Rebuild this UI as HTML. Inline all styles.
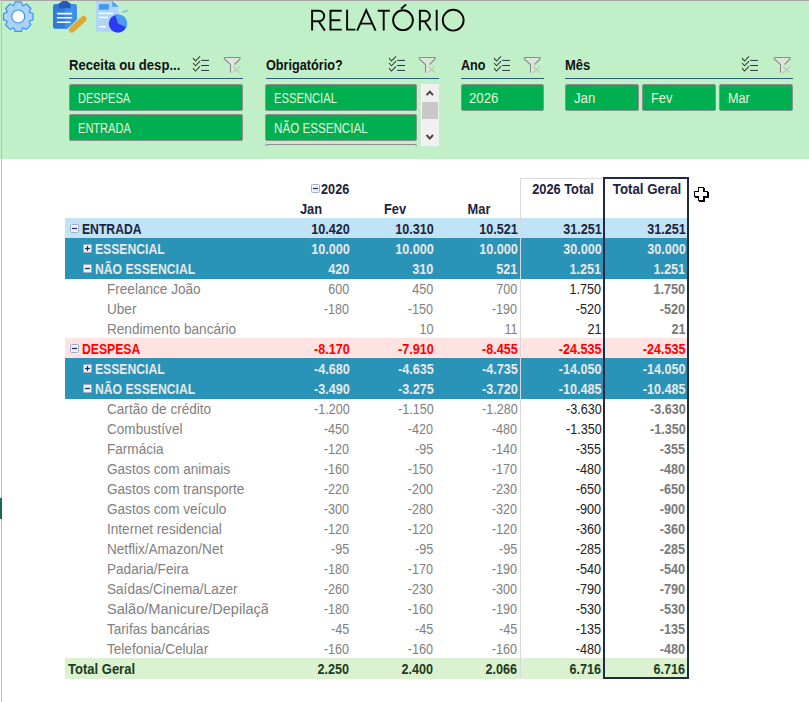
<!DOCTYPE html>
<html><head><meta charset="utf-8"><style>
*{margin:0;padding:0;box-sizing:border-box}
html,body{width:809px;height:702px;overflow:hidden;background:#fff;font-family:"Liberation Sans",sans-serif}
.a{position:absolute}
.t{position:absolute;white-space:nowrap;font-size:13px;line-height:20px}
.btn{position:absolute;background:#00B050;border:1px solid #8f8f8f;border-radius:2px;white-space:nowrap;overflow:hidden}
.stitle{position:absolute;font-weight:bold;font-size:13px;color:#111;white-space:nowrap;line-height:16px}
.uline{position:absolute;height:1px;background:#2A5E80}
.r{position:absolute;left:65px;width:623px;height:20px}
.c{position:absolute;top:0;height:20px;line-height:20px;font-size:13px;white-space:nowrap;text-align:right;padding-top:1px}
.lab{position:absolute;top:0;height:20px;line-height:20px;font-size:13px;white-space:nowrap;padding-top:1px}
</style></head><body>

<div class="a" style="left:0;top:0;width:809px;height:159px;background:#C1F0C8"></div>
<div class="a" style="left:0;top:0;width:809px;height:1px;background:#A6A6A6"></div>
<div class="a" style="left:1px;top:0;width:1px;height:702px;background:#BDBDBD"></div>
<div class="a" style="left:0;top:498px;width:2px;height:21px;background:#1D6A54"></div>
<svg class="a" style="left:0;top:0" width="140" height="40" viewBox="0 0 140 40">
<path d="M13.91 5.51 L15.10 1.93 L21.40 1.93 L22.59 5.51 L22.84 5.61 L23.09 5.72 L26.47 4.03 L30.92 8.48 L29.23 11.86 L29.34 12.11 L29.44 12.36 L33.02 13.55 L33.02 19.85 L29.44 21.04 L29.34 21.29 L29.23 21.54 L30.92 24.92 L26.47 29.37 L23.09 27.68 L22.84 27.79 L22.59 27.89 L21.40 31.47 L15.10 31.47 L13.91 27.89 L13.66 27.79 L13.41 27.68 L10.03 29.37 L5.58 24.92 L7.27 21.54 L7.16 21.29 L7.06 21.04 L3.48 19.85 L3.48 13.55 L7.06 12.36 L7.16 12.11 L7.27 11.86 L5.58 8.48 L10.03 4.03 L13.41 5.72 L13.66 5.61Z" fill="#A9D3FA" stroke="#3D95EE" stroke-width="1.2" stroke-linejoin="round"/>
<circle cx="18.25" cy="16.5" r="6.5" fill="#fff" stroke="#3D95EE" stroke-width="1.2"/>
<path d="M55.5 4 H74.2 Q76.7 4 76.7 6.5 V19.5 L67 28.7 H55.5 Q53 28.7 53 26.2 V6.5 Q53 4 55.5 4Z" fill="#2F7BD6"/>
<path d="M64.7 4 H74.2 Q76.7 4 76.7 6.5 V19.5 L67 28.7 H64.7Z" fill="#3D8FEA"/>
<path d="M58.8 7.8 V4.2 Q58.8 2.6 60.8 2.6 Q61.2 1 63 1 H66.5 Q68.2 1 68.6 2.6 Q70.6 2.6 70.6 4.2 V7.8 Q70.6 8.3 70 8.3 H59.4 Q58.8 8.3 58.8 7.8Z" fill="#2659B8"/>
<g stroke="#fff" stroke-width="1.6" stroke-linecap="round"><line x1="57.5" y1="13.6" x2="71.5" y2="13.6"/><line x1="57.5" y1="17.7" x2="71.5" y2="17.7"/><line x1="57.5" y1="22.3" x2="70" y2="22.3"/></g>
<line x1="72" y1="29.5" x2="83.5" y2="19" stroke="#DDA835" stroke-width="6.2" stroke-linecap="round"/>
<path d="M96.1 1 H112.3 L118.7 6.7 V31.8 H96.1Z" fill="#AED6FB"/>
<path d="M112.3 1 V6.7 H118.7Z" fill="#4C9CF5"/>
<rect x="98.9" y="4.1" width="10" height="5.6" fill="#4596F0"/>
<g stroke="#fff" stroke-width="1.5"><line x1="99" y1="13.4" x2="113" y2="13.4"/><line x1="99" y1="17.4" x2="108" y2="17.4"/><line x1="99" y1="26.7" x2="106" y2="26.7"/></g>
<circle cx="117.9" cy="23.6" r="9.1" fill="#2B3BF5"/>
<path d="M117.90 23.60 L115.30 14.88 A9.1 9.1 0 0 1 126.23 27.26 Z" fill="#4C9CF5"/>
<line x1="122.5" y1="12.3" x2="127.9" y2="10.5" stroke="#7EB8F5" stroke-width="1.5"/>
</svg>
<svg class="a" style="left:300px;top:0" width="180" height="40" viewBox="300 0 180 40"><g fill="none" stroke="#0A0A0A" stroke-width="1.95" stroke-linejoin="miter"><path d="M312.1 30.6 V10.8 H318.95 A5.25 5.25 0 0 1 318.95 21.3 H312.1 M318.6 21.3 L324.9 30.6"/><path d="M341.8 10.8 H330.5 V29.6 H341.8 M330.5 20.2 H340.3"/><path d="M347.1 9.8 V29.6 H355.4"/><path d="M357.2 30.6 L366.2 10.2 L375.6 30.6 M360.8 23.6 H371.8"/><path d="M377.7 10.8 H389.8 M383.7 10.8 V30.6"/><circle cx="403" cy="20.2" r="9.9"/><path d="M401 8.8 L406.2 4.4" stroke-width="1.8"/><path d="M419.9 30.6 V10.8 H424.6 A5.25 5.25 0 0 1 424.6 21.3 H419.9 M424.5 21.3 L430.9 30.6"/><path d="M436.7 9.8 V30.6"/><circle cx="453.2" cy="20.2" r="10.4"/></g></svg>
<div class="a" style="left:69.00px;top:58.00px;font-size:14.00px;line-height:14.00px;color:#111;font-weight:bold;white-space:nowrap;transform:scaleX(0.935);transform-origin:0 50%;">Receita ou desp...</div>
<svg class="a" style="left:191px;top:52px" width="20" height="24" viewBox="0 0 20 24"><path d="M2 6.2 L4.5 9.0 L9 4.4" fill="none" stroke="#2E3B2E" stroke-width="1.05"/><path d="M2 11.0 L4.5 13.8 L9 9.2" fill="none" stroke="#2E3B2E" stroke-width="1.05"/><path d="M2 16.2 L4.5 19.0 L9 14.4" fill="none" stroke="#2E3B2E" stroke-width="1.05"/><line x1="10.2" y1="8.4" x2="18" y2="8.4" stroke="#2A3050" stroke-width="1.0"/><line x1="10.2" y1="13.5" x2="18" y2="13.5" stroke="#2A3050" stroke-width="1.0"/><line x1="10.2" y1="18.4" x2="18" y2="18.4" stroke="#2A3050" stroke-width="1.0"/></svg><svg class="a" style="left:222px;top:52px" width="20" height="24" viewBox="0 0 20 24"><path d="M2.3 5.5 H18 V7 L12.5 12.5 V20.8 H8.5 V12.5 L2.3 7Z" fill="#DCE6DC"/><path d="M2.3 5.5 H18 V7 L12.5 12.5 M8.5 20.8 V12.5 L2.3 7 V5.5" fill="none" stroke="#8C8C88" stroke-width="1.1"/><path d="M11 14.5 L18 20.8 M18 14.5 L11 20.8" stroke="#B5B8AE" stroke-width="1"/></svg>
<div class="uline" style="left:69.0px;top:78px;width:174.0px"></div>
<div class="btn" style="left:69.0px;top:84px;width:174.0px;height:27px"></div>
<div class="a" style="left:78.00px;top:91.00px;font-size:14.00px;line-height:14.00px;color:#EAF2DC;white-space:nowrap;transform:scaleX(0.790);transform-origin:0 50%;">DESPESA</div>
<div class="btn" style="left:69.0px;top:114px;width:174.0px;height:27px"></div>
<div class="a" style="left:78.00px;top:121.00px;font-size:14.00px;line-height:14.00px;color:#EAF2DC;white-space:nowrap;transform:scaleX(0.790);transform-origin:0 50%;">ENTRADA</div>
<div class="a" style="left:265.50px;top:58.00px;font-size:14.00px;line-height:14.00px;color:#111;font-weight:bold;white-space:nowrap;transform:scaleX(0.905);transform-origin:0 50%;">Obrigatório?</div>
<svg class="a" style="left:387px;top:52px" width="20" height="24" viewBox="0 0 20 24"><path d="M2 6.2 L4.5 9.0 L9 4.4" fill="none" stroke="#2E3B2E" stroke-width="1.05"/><path d="M2 11.0 L4.5 13.8 L9 9.2" fill="none" stroke="#2E3B2E" stroke-width="1.05"/><path d="M2 16.2 L4.5 19.0 L9 14.4" fill="none" stroke="#2E3B2E" stroke-width="1.05"/><line x1="10.2" y1="8.4" x2="18" y2="8.4" stroke="#2A3050" stroke-width="1.0"/><line x1="10.2" y1="13.5" x2="18" y2="13.5" stroke="#2A3050" stroke-width="1.0"/><line x1="10.2" y1="18.4" x2="18" y2="18.4" stroke="#2A3050" stroke-width="1.0"/></svg><svg class="a" style="left:417px;top:52px" width="20" height="24" viewBox="0 0 20 24"><path d="M2.3 5.5 H18 V7 L12.5 12.5 V20.8 H8.5 V12.5 L2.3 7Z" fill="#DCE6DC"/><path d="M2.3 5.5 H18 V7 L12.5 12.5 M8.5 20.8 V12.5 L2.3 7 V5.5" fill="none" stroke="#8C8C88" stroke-width="1.1"/><path d="M11 14.5 L18 20.8 M18 14.5 L11 20.8" stroke="#B5B8AE" stroke-width="1"/></svg>
<div class="uline" style="left:265.5px;top:78px;width:173.5px"></div>
<div class="a" style="left:265px;top:84px;width:156px;height:62px;overflow:hidden">
<div class="btn" style="left:0;top:0;width:152px;height:27px"></div>
<div class="btn" style="left:0;top:30px;width:152px;height:27px"></div>
<div class="btn" style="left:0;top:60px;width:152px;height:27px;background:#C9DEF0"></div>
</div>
<div class="a" style="left:274.30px;top:91.00px;font-size:14.00px;line-height:14.00px;color:#EAF2DC;white-space:nowrap;transform:scaleX(0.800);transform-origin:0 50%;">ESSENCIAL</div>
<div class="a" style="left:274.30px;top:121.00px;font-size:14.00px;line-height:14.00px;color:#EAF2DC;white-space:nowrap;transform:scaleX(0.830);transform-origin:0 50%;">NÃO ESSENCIAL</div>
<div class="a" style="left:421px;top:84px;width:18px;height:62px;background:#F0F0F0;border-left:1px solid #fff"></div>
<div class="a" style="left:422px;top:102px;width:16px;height:17px;background:#C8C8C8"></div>
<svg class="a" style="left:421px;top:84px" width="18" height="62" viewBox="0 0 18 62"><path d="M5.6 11.2 L8.8 7.6 L12 11.2" fill="none" stroke="#4A4038" stroke-width="1.9"/><path d="M5.6 51 L8.8 54.6 L12 51" fill="none" stroke="#4A4038" stroke-width="1.9"/></svg>
<div class="a" style="left:461.00px;top:58.00px;font-size:14.00px;line-height:14.00px;color:#111;font-weight:bold;white-space:nowrap;transform:scaleX(0.900);transform-origin:0 50%;">Ano</div>
<svg class="a" style="left:492px;top:52px" width="20" height="24" viewBox="0 0 20 24"><path d="M2 6.2 L4.5 9.0 L9 4.4" fill="none" stroke="#2E3B2E" stroke-width="1.05"/><path d="M2 11.0 L4.5 13.8 L9 9.2" fill="none" stroke="#2E3B2E" stroke-width="1.05"/><path d="M2 16.2 L4.5 19.0 L9 14.4" fill="none" stroke="#2E3B2E" stroke-width="1.05"/><line x1="10.2" y1="8.4" x2="18" y2="8.4" stroke="#2A3050" stroke-width="1.0"/><line x1="10.2" y1="13.5" x2="18" y2="13.5" stroke="#2A3050" stroke-width="1.0"/><line x1="10.2" y1="18.4" x2="18" y2="18.4" stroke="#2A3050" stroke-width="1.0"/></svg><svg class="a" style="left:522px;top:52px" width="20" height="24" viewBox="0 0 20 24"><path d="M2.3 5.5 H18 V7 L12.5 12.5 V20.8 H8.5 V12.5 L2.3 7Z" fill="#DCE6DC"/><path d="M2.3 5.5 H18 V7 L12.5 12.5 M8.5 20.8 V12.5 L2.3 7 V5.5" fill="none" stroke="#8C8C88" stroke-width="1.1"/><path d="M11 14.5 L18 20.8 M18 14.5 L11 20.8" stroke="#B5B8AE" stroke-width="1"/></svg>
<div class="uline" style="left:461.0px;top:78px;width:83.0px"></div>
<div class="btn" style="left:461.0px;top:84px;width:83.0px;height:27px"></div>
<div class="a" style="left:469.00px;top:91.00px;font-size:14.00px;line-height:14.00px;color:#EAF2DC;white-space:nowrap;transform:scaleX(0.940);transform-origin:0 50%;">2026</div>
<div class="a" style="left:565.00px;top:58.00px;font-size:14.00px;line-height:14.00px;color:#111;font-weight:bold;white-space:nowrap;transform:scaleX(0.930);transform-origin:0 50%;">Mês</div>
<svg class="a" style="left:740px;top:52px" width="20" height="24" viewBox="0 0 20 24"><path d="M2 6.2 L4.5 9.0 L9 4.4" fill="none" stroke="#2E3B2E" stroke-width="1.05"/><path d="M2 11.0 L4.5 13.8 L9 9.2" fill="none" stroke="#2E3B2E" stroke-width="1.05"/><path d="M2 16.2 L4.5 19.0 L9 14.4" fill="none" stroke="#2E3B2E" stroke-width="1.05"/><line x1="10.2" y1="8.4" x2="18" y2="8.4" stroke="#2A3050" stroke-width="1.0"/><line x1="10.2" y1="13.5" x2="18" y2="13.5" stroke="#2A3050" stroke-width="1.0"/><line x1="10.2" y1="18.4" x2="18" y2="18.4" stroke="#2A3050" stroke-width="1.0"/></svg><svg class="a" style="left:772px;top:52px" width="20" height="24" viewBox="0 0 20 24"><path d="M2.3 5.5 H18 V7 L12.5 12.5 V20.8 H8.5 V12.5 L2.3 7Z" fill="#DCE6DC"/><path d="M2.3 5.5 H18 V7 L12.5 12.5 M8.5 20.8 V12.5 L2.3 7 V5.5" fill="none" stroke="#8C8C88" stroke-width="1.1"/><path d="M11 14.5 L18 20.8 M18 14.5 L11 20.8" stroke="#B5B8AE" stroke-width="1"/></svg>
<div class="uline" style="left:565.0px;top:78px;width:228.0px"></div>
<div class="btn" style="left:565.0px;top:84px;width:74.0px;height:27px"></div>
<div class="a" style="left:574.00px;top:91.00px;font-size:14.00px;line-height:14.00px;color:#EAF2DC;white-space:nowrap;transform:scaleX(0.940);transform-origin:0 50%;">Jan</div>
<div class="btn" style="left:642.0px;top:84px;width:74.0px;height:27px"></div>
<div class="a" style="left:651.00px;top:91.00px;font-size:14.00px;line-height:14.00px;color:#EAF2DC;white-space:nowrap;transform:scaleX(0.920);transform-origin:0 50%;">Fev</div>
<div class="btn" style="left:719.0px;top:84px;width:74.0px;height:27px"></div>
<div class="a" style="left:728.00px;top:91.00px;font-size:14.00px;line-height:14.00px;color:#EAF2DC;white-space:nowrap;transform:scaleX(0.900);transform-origin:0 50%;">Mar</div>
<div class="a" style="left:520px;top:178px;width:84px;height:1px;background:#D9D9D9"></div>
<svg class="a" style="left:311px;top:184px" width="9" height="9" viewBox="0 0 9 9"><rect x="0.5" y="0.5" width="8" height="8" rx="1" fill="#EDF0F5" stroke="#A3AEC2" stroke-width="1"/><line x1="2" y1="4.5" x2="7" y2="4.5" stroke="#1D2A66" stroke-width="1.2"/></svg>
<div class="a" style="right:459.50px;top:182.00px;font-size:14.00px;line-height:14.00px;color:#1C2440;font-weight:bold;white-space:nowrap;transform:scaleX(0.900);transform-origin:100% 50%;">2026</div>
<div class="a" style="left:311.00px;top:202.00px;font-size:14.00px;line-height:14.00px;color:#1C2440;font-weight:bold;white-space:nowrap;transform:translateX(-50%) scaleX(0.920);transform-origin:50% 50%;">Jan</div>
<div class="a" style="left:395.00px;top:202.00px;font-size:14.00px;line-height:14.00px;color:#1C2440;font-weight:bold;white-space:nowrap;transform:translateX(-50%) scaleX(0.920);transform-origin:50% 50%;">Fev</div>
<div class="a" style="left:478.50px;top:202.00px;font-size:14.00px;line-height:14.00px;color:#1C2440;font-weight:bold;white-space:nowrap;transform:translateX(-50%) scaleX(0.920);transform-origin:50% 50%;">Mar</div>
<div class="a" style="left:562.80px;top:182.00px;font-size:14.00px;line-height:14.00px;color:#1C2440;font-weight:bold;white-space:nowrap;transform:translateX(-50%) scaleX(0.915);transform-origin:50% 50%;">2026 Total</div>
<div class="a" style="left:647.00px;top:182.00px;font-size:14.00px;line-height:14.00px;color:#1C2440;font-weight:bold;white-space:nowrap;transform:translateX(-50%) scaleX(0.950);transform-origin:50% 50%;">Total Geral</div>
<div class="a" style="left:65px;top:218px;width:623px;height:20px;background:#C0E4F5"></div>
<svg class="a" style="left:70px;top:224px" width="9" height="9" viewBox="0 0 9 9"><rect x="0.5" y="0.5" width="8" height="8" rx="1" fill="#EDF0F5" stroke="#A3AEC2" stroke-width="1"/><line x1="2" y1="4.5" x2="7" y2="4.5" stroke="#1D2A66" stroke-width="1.2"/></svg>
<div class="a" style="left:81.50px;top:222.00px;font-size:14.00px;line-height:14.00px;color:#1C2440;font-weight:bold;white-space:nowrap;transform:scaleX(0.870);transform-origin:0 50%;">ENTRADA</div>
<div class="a" style="right:459.50px;top:222.00px;font-size:14.00px;line-height:14.00px;color:#1C2440;font-weight:bold;white-space:nowrap;transform:scaleX(0.900);transform-origin:100% 50%;">10.420</div>
<div class="a" style="right:375.50px;top:222.00px;font-size:14.00px;line-height:14.00px;color:#1C2440;font-weight:bold;white-space:nowrap;transform:scaleX(0.900);transform-origin:100% 50%;">10.310</div>
<div class="a" style="right:291.50px;top:222.00px;font-size:14.00px;line-height:14.00px;color:#1C2440;font-weight:bold;white-space:nowrap;transform:scaleX(0.900);transform-origin:100% 50%;">10.521</div>
<div class="a" style="right:207.50px;top:222.00px;font-size:14.00px;line-height:14.00px;color:#1C2440;font-weight:bold;white-space:nowrap;transform:scaleX(0.900);transform-origin:100% 50%;">31.251</div>
<div class="a" style="right:123.50px;top:222.00px;font-size:14.00px;line-height:14.00px;color:#1C2440;font-weight:bold;white-space:nowrap;transform:scaleX(0.900);transform-origin:100% 50%;">31.251</div>
<div class="a" style="left:65px;top:238px;width:623px;height:20px;background:#2A93B8"></div>
<svg class="a" style="left:83px;top:244px" width="9" height="9" viewBox="0 0 9 9"><rect x="0.5" y="0.5" width="8" height="8" rx="1" fill="#EDF0F5" stroke="#A3AEC2" stroke-width="1"/><line x1="2" y1="4.5" x2="7" y2="4.5" stroke="#1D2A66" stroke-width="1.2"/><line x1="4.5" y1="2" x2="4.5" y2="7" stroke="#1D2A66" stroke-width="1.2"/></svg>
<div class="a" style="left:95.00px;top:242.00px;font-size:14.00px;line-height:14.00px;color:#E8E8E8;font-weight:bold;white-space:nowrap;transform:scaleX(0.870);transform-origin:0 50%;">ESSENCIAL</div>
<div class="a" style="right:459.50px;top:242.00px;font-size:14.00px;line-height:14.00px;color:#E8E8E8;font-weight:bold;white-space:nowrap;transform:scaleX(0.900);transform-origin:100% 50%;">10.000</div>
<div class="a" style="right:375.50px;top:242.00px;font-size:14.00px;line-height:14.00px;color:#E8E8E8;font-weight:bold;white-space:nowrap;transform:scaleX(0.900);transform-origin:100% 50%;">10.000</div>
<div class="a" style="right:291.50px;top:242.00px;font-size:14.00px;line-height:14.00px;color:#E8E8E8;font-weight:bold;white-space:nowrap;transform:scaleX(0.900);transform-origin:100% 50%;">10.000</div>
<div class="a" style="right:207.50px;top:242.00px;font-size:14.00px;line-height:14.00px;color:#E8E8E8;font-weight:bold;white-space:nowrap;transform:scaleX(0.900);transform-origin:100% 50%;">30.000</div>
<div class="a" style="right:123.50px;top:242.00px;font-size:14.00px;line-height:14.00px;color:#E8E8E8;font-weight:bold;white-space:nowrap;transform:scaleX(0.900);transform-origin:100% 50%;">30.000</div>
<div class="a" style="left:65px;top:258px;width:623px;height:21px;background:#2A93B8"></div>
<svg class="a" style="left:83px;top:264px" width="9" height="9" viewBox="0 0 9 9"><rect x="0.5" y="0.5" width="8" height="8" rx="1" fill="#EDF0F5" stroke="#A3AEC2" stroke-width="1"/><line x1="2" y1="4.5" x2="7" y2="4.5" stroke="#1D2A66" stroke-width="1.2"/></svg>
<div class="a" style="left:95.00px;top:262.00px;font-size:14.00px;line-height:14.00px;color:#E8E8E8;font-weight:bold;white-space:nowrap;transform:scaleX(0.870);transform-origin:0 50%;">NÃO ESSENCIAL</div>
<div class="a" style="right:459.50px;top:262.00px;font-size:14.00px;line-height:14.00px;color:#E8E8E8;font-weight:bold;white-space:nowrap;transform:scaleX(0.900);transform-origin:100% 50%;">420</div>
<div class="a" style="right:375.50px;top:262.00px;font-size:14.00px;line-height:14.00px;color:#E8E8E8;font-weight:bold;white-space:nowrap;transform:scaleX(0.900);transform-origin:100% 50%;">310</div>
<div class="a" style="right:291.50px;top:262.00px;font-size:14.00px;line-height:14.00px;color:#E8E8E8;font-weight:bold;white-space:nowrap;transform:scaleX(0.900);transform-origin:100% 50%;">521</div>
<div class="a" style="right:207.50px;top:262.00px;font-size:14.00px;line-height:14.00px;color:#E8E8E8;font-weight:bold;white-space:nowrap;transform:scaleX(0.900);transform-origin:100% 50%;">1.251</div>
<div class="a" style="right:123.50px;top:262.00px;font-size:14.00px;line-height:14.00px;color:#E8E8E8;font-weight:bold;white-space:nowrap;transform:scaleX(0.900);transform-origin:100% 50%;">1.251</div>
<div class="a" style="left:106.80px;top:282.00px;font-size:14.00px;line-height:14.00px;color:#808080;white-space:nowrap;transform:scaleX(0.970);transform-origin:0 50%;">Freelance João</div>
<div class="a" style="right:459.50px;top:282.00px;font-size:14.00px;line-height:14.00px;color:#808080;white-space:nowrap;transform:scaleX(0.900);transform-origin:100% 50%;">600</div>
<div class="a" style="right:375.50px;top:282.00px;font-size:14.00px;line-height:14.00px;color:#808080;white-space:nowrap;transform:scaleX(0.900);transform-origin:100% 50%;">450</div>
<div class="a" style="right:291.50px;top:282.00px;font-size:14.00px;line-height:14.00px;color:#808080;white-space:nowrap;transform:scaleX(0.900);transform-origin:100% 50%;">700</div>
<div class="a" style="right:207.50px;top:282.00px;font-size:14.00px;line-height:14.00px;color:#222222;white-space:nowrap;transform:scaleX(0.900);transform-origin:100% 50%;">1.750</div>
<div class="a" style="right:123.50px;top:282.00px;font-size:14.00px;line-height:14.00px;color:#7A7A7A;font-weight:bold;white-space:nowrap;transform:scaleX(0.900);transform-origin:100% 50%;">1.750</div>
<div class="a" style="left:106.80px;top:302.00px;font-size:14.00px;line-height:14.00px;color:#808080;white-space:nowrap;transform:scaleX(0.970);transform-origin:0 50%;">Uber</div>
<div class="a" style="right:459.50px;top:302.00px;font-size:14.00px;line-height:14.00px;color:#808080;white-space:nowrap;transform:scaleX(0.900);transform-origin:100% 50%;">-180</div>
<div class="a" style="right:375.50px;top:302.00px;font-size:14.00px;line-height:14.00px;color:#808080;white-space:nowrap;transform:scaleX(0.900);transform-origin:100% 50%;">-150</div>
<div class="a" style="right:291.50px;top:302.00px;font-size:14.00px;line-height:14.00px;color:#808080;white-space:nowrap;transform:scaleX(0.900);transform-origin:100% 50%;">-190</div>
<div class="a" style="right:207.50px;top:302.00px;font-size:14.00px;line-height:14.00px;color:#222222;white-space:nowrap;transform:scaleX(0.900);transform-origin:100% 50%;">-520</div>
<div class="a" style="right:123.50px;top:302.00px;font-size:14.00px;line-height:14.00px;color:#7A7A7A;font-weight:bold;white-space:nowrap;transform:scaleX(0.900);transform-origin:100% 50%;">-520</div>
<div class="a" style="left:106.80px;top:322.00px;font-size:14.00px;line-height:14.00px;color:#808080;white-space:nowrap;transform:scaleX(0.970);transform-origin:0 50%;">Rendimento bancário</div>
<div class="a" style="right:375.50px;top:322.00px;font-size:14.00px;line-height:14.00px;color:#808080;white-space:nowrap;transform:scaleX(0.900);transform-origin:100% 50%;">10</div>
<div class="a" style="right:291.50px;top:322.00px;font-size:14.00px;line-height:14.00px;color:#808080;white-space:nowrap;transform:scaleX(0.900);transform-origin:100% 50%;">11</div>
<div class="a" style="right:207.50px;top:322.00px;font-size:14.00px;line-height:14.00px;color:#222222;white-space:nowrap;transform:scaleX(0.900);transform-origin:100% 50%;">21</div>
<div class="a" style="right:123.50px;top:322.00px;font-size:14.00px;line-height:14.00px;color:#7A7A7A;font-weight:bold;white-space:nowrap;transform:scaleX(0.900);transform-origin:100% 50%;">21</div>
<div class="a" style="left:65px;top:338px;width:623px;height:20px;background:#FFE2E2"></div>
<svg class="a" style="left:70px;top:344px" width="9" height="9" viewBox="0 0 9 9"><rect x="0.5" y="0.5" width="8" height="8" rx="1" fill="#EDF0F5" stroke="#A3AEC2" stroke-width="1"/><line x1="2" y1="4.5" x2="7" y2="4.5" stroke="#1D2A66" stroke-width="1.2"/></svg>
<div class="a" style="left:81.50px;top:342.00px;font-size:14.00px;line-height:14.00px;color:#FF0000;font-weight:bold;white-space:nowrap;transform:scaleX(0.870);transform-origin:0 50%;">DESPESA</div>
<div class="a" style="right:459.50px;top:342.00px;font-size:14.00px;line-height:14.00px;color:#FF0000;font-weight:bold;white-space:nowrap;transform:scaleX(0.900);transform-origin:100% 50%;">-8.170</div>
<div class="a" style="right:375.50px;top:342.00px;font-size:14.00px;line-height:14.00px;color:#FF0000;font-weight:bold;white-space:nowrap;transform:scaleX(0.900);transform-origin:100% 50%;">-7.910</div>
<div class="a" style="right:291.50px;top:342.00px;font-size:14.00px;line-height:14.00px;color:#FF0000;font-weight:bold;white-space:nowrap;transform:scaleX(0.900);transform-origin:100% 50%;">-8.455</div>
<div class="a" style="right:207.50px;top:342.00px;font-size:14.00px;line-height:14.00px;color:#FF0000;font-weight:bold;white-space:nowrap;transform:scaleX(0.900);transform-origin:100% 50%;">-24.535</div>
<div class="a" style="right:123.50px;top:342.00px;font-size:14.00px;line-height:14.00px;color:#FF0000;font-weight:bold;white-space:nowrap;transform:scaleX(0.900);transform-origin:100% 50%;">-24.535</div>
<div class="a" style="left:65px;top:358px;width:623px;height:20px;background:#2A93B8"></div>
<svg class="a" style="left:83px;top:364px" width="9" height="9" viewBox="0 0 9 9"><rect x="0.5" y="0.5" width="8" height="8" rx="1" fill="#EDF0F5" stroke="#A3AEC2" stroke-width="1"/><line x1="2" y1="4.5" x2="7" y2="4.5" stroke="#1D2A66" stroke-width="1.2"/><line x1="4.5" y1="2" x2="4.5" y2="7" stroke="#1D2A66" stroke-width="1.2"/></svg>
<div class="a" style="left:95.00px;top:362.00px;font-size:14.00px;line-height:14.00px;color:#E8E8E8;font-weight:bold;white-space:nowrap;transform:scaleX(0.870);transform-origin:0 50%;">ESSENCIAL</div>
<div class="a" style="right:459.50px;top:362.00px;font-size:14.00px;line-height:14.00px;color:#E8E8E8;font-weight:bold;white-space:nowrap;transform:scaleX(0.900);transform-origin:100% 50%;">-4.680</div>
<div class="a" style="right:375.50px;top:362.00px;font-size:14.00px;line-height:14.00px;color:#E8E8E8;font-weight:bold;white-space:nowrap;transform:scaleX(0.900);transform-origin:100% 50%;">-4.635</div>
<div class="a" style="right:291.50px;top:362.00px;font-size:14.00px;line-height:14.00px;color:#E8E8E8;font-weight:bold;white-space:nowrap;transform:scaleX(0.900);transform-origin:100% 50%;">-4.735</div>
<div class="a" style="right:207.50px;top:362.00px;font-size:14.00px;line-height:14.00px;color:#E8E8E8;font-weight:bold;white-space:nowrap;transform:scaleX(0.900);transform-origin:100% 50%;">-14.050</div>
<div class="a" style="right:123.50px;top:362.00px;font-size:14.00px;line-height:14.00px;color:#E8E8E8;font-weight:bold;white-space:nowrap;transform:scaleX(0.900);transform-origin:100% 50%;">-14.050</div>
<div class="a" style="left:65px;top:378px;width:623px;height:21px;background:#2A93B8"></div>
<svg class="a" style="left:83px;top:384px" width="9" height="9" viewBox="0 0 9 9"><rect x="0.5" y="0.5" width="8" height="8" rx="1" fill="#EDF0F5" stroke="#A3AEC2" stroke-width="1"/><line x1="2" y1="4.5" x2="7" y2="4.5" stroke="#1D2A66" stroke-width="1.2"/></svg>
<div class="a" style="left:95.00px;top:382.00px;font-size:14.00px;line-height:14.00px;color:#E8E8E8;font-weight:bold;white-space:nowrap;transform:scaleX(0.870);transform-origin:0 50%;">NÃO ESSENCIAL</div>
<div class="a" style="right:459.50px;top:382.00px;font-size:14.00px;line-height:14.00px;color:#E8E8E8;font-weight:bold;white-space:nowrap;transform:scaleX(0.900);transform-origin:100% 50%;">-3.490</div>
<div class="a" style="right:375.50px;top:382.00px;font-size:14.00px;line-height:14.00px;color:#E8E8E8;font-weight:bold;white-space:nowrap;transform:scaleX(0.900);transform-origin:100% 50%;">-3.275</div>
<div class="a" style="right:291.50px;top:382.00px;font-size:14.00px;line-height:14.00px;color:#E8E8E8;font-weight:bold;white-space:nowrap;transform:scaleX(0.900);transform-origin:100% 50%;">-3.720</div>
<div class="a" style="right:207.50px;top:382.00px;font-size:14.00px;line-height:14.00px;color:#E8E8E8;font-weight:bold;white-space:nowrap;transform:scaleX(0.900);transform-origin:100% 50%;">-10.485</div>
<div class="a" style="right:123.50px;top:382.00px;font-size:14.00px;line-height:14.00px;color:#E8E8E8;font-weight:bold;white-space:nowrap;transform:scaleX(0.900);transform-origin:100% 50%;">-10.485</div>
<div class="a" style="left:106.80px;top:402.00px;font-size:14.00px;line-height:14.00px;color:#808080;white-space:nowrap;transform:scaleX(0.970);transform-origin:0 50%;">Cartão de crédito</div>
<div class="a" style="right:459.50px;top:402.00px;font-size:14.00px;line-height:14.00px;color:#808080;white-space:nowrap;transform:scaleX(0.900);transform-origin:100% 50%;">-1.200</div>
<div class="a" style="right:375.50px;top:402.00px;font-size:14.00px;line-height:14.00px;color:#808080;white-space:nowrap;transform:scaleX(0.900);transform-origin:100% 50%;">-1.150</div>
<div class="a" style="right:291.50px;top:402.00px;font-size:14.00px;line-height:14.00px;color:#808080;white-space:nowrap;transform:scaleX(0.900);transform-origin:100% 50%;">-1.280</div>
<div class="a" style="right:207.50px;top:402.00px;font-size:14.00px;line-height:14.00px;color:#222222;white-space:nowrap;transform:scaleX(0.900);transform-origin:100% 50%;">-3.630</div>
<div class="a" style="right:123.50px;top:402.00px;font-size:14.00px;line-height:14.00px;color:#7A7A7A;font-weight:bold;white-space:nowrap;transform:scaleX(0.900);transform-origin:100% 50%;">-3.630</div>
<div class="a" style="left:106.80px;top:422.00px;font-size:14.00px;line-height:14.00px;color:#808080;white-space:nowrap;transform:scaleX(0.970);transform-origin:0 50%;">Combustível</div>
<div class="a" style="right:459.50px;top:422.00px;font-size:14.00px;line-height:14.00px;color:#808080;white-space:nowrap;transform:scaleX(0.900);transform-origin:100% 50%;">-450</div>
<div class="a" style="right:375.50px;top:422.00px;font-size:14.00px;line-height:14.00px;color:#808080;white-space:nowrap;transform:scaleX(0.900);transform-origin:100% 50%;">-420</div>
<div class="a" style="right:291.50px;top:422.00px;font-size:14.00px;line-height:14.00px;color:#808080;white-space:nowrap;transform:scaleX(0.900);transform-origin:100% 50%;">-480</div>
<div class="a" style="right:207.50px;top:422.00px;font-size:14.00px;line-height:14.00px;color:#222222;white-space:nowrap;transform:scaleX(0.900);transform-origin:100% 50%;">-1.350</div>
<div class="a" style="right:123.50px;top:422.00px;font-size:14.00px;line-height:14.00px;color:#7A7A7A;font-weight:bold;white-space:nowrap;transform:scaleX(0.900);transform-origin:100% 50%;">-1.350</div>
<div class="a" style="left:106.80px;top:442.00px;font-size:14.00px;line-height:14.00px;color:#808080;white-space:nowrap;transform:scaleX(0.970);transform-origin:0 50%;">Farmácia</div>
<div class="a" style="right:459.50px;top:442.00px;font-size:14.00px;line-height:14.00px;color:#808080;white-space:nowrap;transform:scaleX(0.900);transform-origin:100% 50%;">-120</div>
<div class="a" style="right:375.50px;top:442.00px;font-size:14.00px;line-height:14.00px;color:#808080;white-space:nowrap;transform:scaleX(0.900);transform-origin:100% 50%;">-95</div>
<div class="a" style="right:291.50px;top:442.00px;font-size:14.00px;line-height:14.00px;color:#808080;white-space:nowrap;transform:scaleX(0.900);transform-origin:100% 50%;">-140</div>
<div class="a" style="right:207.50px;top:442.00px;font-size:14.00px;line-height:14.00px;color:#222222;white-space:nowrap;transform:scaleX(0.900);transform-origin:100% 50%;">-355</div>
<div class="a" style="right:123.50px;top:442.00px;font-size:14.00px;line-height:14.00px;color:#7A7A7A;font-weight:bold;white-space:nowrap;transform:scaleX(0.900);transform-origin:100% 50%;">-355</div>
<div class="a" style="left:106.80px;top:462.00px;font-size:14.00px;line-height:14.00px;color:#808080;white-space:nowrap;transform:scaleX(0.970);transform-origin:0 50%;">Gastos com animais</div>
<div class="a" style="right:459.50px;top:462.00px;font-size:14.00px;line-height:14.00px;color:#808080;white-space:nowrap;transform:scaleX(0.900);transform-origin:100% 50%;">-160</div>
<div class="a" style="right:375.50px;top:462.00px;font-size:14.00px;line-height:14.00px;color:#808080;white-space:nowrap;transform:scaleX(0.900);transform-origin:100% 50%;">-150</div>
<div class="a" style="right:291.50px;top:462.00px;font-size:14.00px;line-height:14.00px;color:#808080;white-space:nowrap;transform:scaleX(0.900);transform-origin:100% 50%;">-170</div>
<div class="a" style="right:207.50px;top:462.00px;font-size:14.00px;line-height:14.00px;color:#222222;white-space:nowrap;transform:scaleX(0.900);transform-origin:100% 50%;">-480</div>
<div class="a" style="right:123.50px;top:462.00px;font-size:14.00px;line-height:14.00px;color:#7A7A7A;font-weight:bold;white-space:nowrap;transform:scaleX(0.900);transform-origin:100% 50%;">-480</div>
<div class="a" style="left:106.80px;top:482.00px;font-size:14.00px;line-height:14.00px;color:#808080;white-space:nowrap;transform:scaleX(0.970);transform-origin:0 50%;">Gastos com transporte</div>
<div class="a" style="right:459.50px;top:482.00px;font-size:14.00px;line-height:14.00px;color:#808080;white-space:nowrap;transform:scaleX(0.900);transform-origin:100% 50%;">-220</div>
<div class="a" style="right:375.50px;top:482.00px;font-size:14.00px;line-height:14.00px;color:#808080;white-space:nowrap;transform:scaleX(0.900);transform-origin:100% 50%;">-200</div>
<div class="a" style="right:291.50px;top:482.00px;font-size:14.00px;line-height:14.00px;color:#808080;white-space:nowrap;transform:scaleX(0.900);transform-origin:100% 50%;">-230</div>
<div class="a" style="right:207.50px;top:482.00px;font-size:14.00px;line-height:14.00px;color:#222222;white-space:nowrap;transform:scaleX(0.900);transform-origin:100% 50%;">-650</div>
<div class="a" style="right:123.50px;top:482.00px;font-size:14.00px;line-height:14.00px;color:#7A7A7A;font-weight:bold;white-space:nowrap;transform:scaleX(0.900);transform-origin:100% 50%;">-650</div>
<div class="a" style="left:106.80px;top:502.00px;font-size:14.00px;line-height:14.00px;color:#808080;white-space:nowrap;transform:scaleX(0.970);transform-origin:0 50%;">Gastos com veículo</div>
<div class="a" style="right:459.50px;top:502.00px;font-size:14.00px;line-height:14.00px;color:#808080;white-space:nowrap;transform:scaleX(0.900);transform-origin:100% 50%;">-300</div>
<div class="a" style="right:375.50px;top:502.00px;font-size:14.00px;line-height:14.00px;color:#808080;white-space:nowrap;transform:scaleX(0.900);transform-origin:100% 50%;">-280</div>
<div class="a" style="right:291.50px;top:502.00px;font-size:14.00px;line-height:14.00px;color:#808080;white-space:nowrap;transform:scaleX(0.900);transform-origin:100% 50%;">-320</div>
<div class="a" style="right:207.50px;top:502.00px;font-size:14.00px;line-height:14.00px;color:#222222;white-space:nowrap;transform:scaleX(0.900);transform-origin:100% 50%;">-900</div>
<div class="a" style="right:123.50px;top:502.00px;font-size:14.00px;line-height:14.00px;color:#7A7A7A;font-weight:bold;white-space:nowrap;transform:scaleX(0.900);transform-origin:100% 50%;">-900</div>
<div class="a" style="left:106.80px;top:522.00px;font-size:14.00px;line-height:14.00px;color:#808080;white-space:nowrap;transform:scaleX(0.970);transform-origin:0 50%;">Internet residencial</div>
<div class="a" style="right:459.50px;top:522.00px;font-size:14.00px;line-height:14.00px;color:#808080;white-space:nowrap;transform:scaleX(0.900);transform-origin:100% 50%;">-120</div>
<div class="a" style="right:375.50px;top:522.00px;font-size:14.00px;line-height:14.00px;color:#808080;white-space:nowrap;transform:scaleX(0.900);transform-origin:100% 50%;">-120</div>
<div class="a" style="right:291.50px;top:522.00px;font-size:14.00px;line-height:14.00px;color:#808080;white-space:nowrap;transform:scaleX(0.900);transform-origin:100% 50%;">-120</div>
<div class="a" style="right:207.50px;top:522.00px;font-size:14.00px;line-height:14.00px;color:#222222;white-space:nowrap;transform:scaleX(0.900);transform-origin:100% 50%;">-360</div>
<div class="a" style="right:123.50px;top:522.00px;font-size:14.00px;line-height:14.00px;color:#7A7A7A;font-weight:bold;white-space:nowrap;transform:scaleX(0.900);transform-origin:100% 50%;">-360</div>
<div class="a" style="left:106.80px;top:542.00px;font-size:14.00px;line-height:14.00px;color:#808080;white-space:nowrap;transform:scaleX(0.970);transform-origin:0 50%;">Netflix/Amazon/Net</div>
<div class="a" style="right:459.50px;top:542.00px;font-size:14.00px;line-height:14.00px;color:#808080;white-space:nowrap;transform:scaleX(0.900);transform-origin:100% 50%;">-95</div>
<div class="a" style="right:375.50px;top:542.00px;font-size:14.00px;line-height:14.00px;color:#808080;white-space:nowrap;transform:scaleX(0.900);transform-origin:100% 50%;">-95</div>
<div class="a" style="right:291.50px;top:542.00px;font-size:14.00px;line-height:14.00px;color:#808080;white-space:nowrap;transform:scaleX(0.900);transform-origin:100% 50%;">-95</div>
<div class="a" style="right:207.50px;top:542.00px;font-size:14.00px;line-height:14.00px;color:#222222;white-space:nowrap;transform:scaleX(0.900);transform-origin:100% 50%;">-285</div>
<div class="a" style="right:123.50px;top:542.00px;font-size:14.00px;line-height:14.00px;color:#7A7A7A;font-weight:bold;white-space:nowrap;transform:scaleX(0.900);transform-origin:100% 50%;">-285</div>
<div class="a" style="left:106.80px;top:562.00px;font-size:14.00px;line-height:14.00px;color:#808080;white-space:nowrap;transform:scaleX(0.970);transform-origin:0 50%;">Padaria/Feira</div>
<div class="a" style="right:459.50px;top:562.00px;font-size:14.00px;line-height:14.00px;color:#808080;white-space:nowrap;transform:scaleX(0.900);transform-origin:100% 50%;">-180</div>
<div class="a" style="right:375.50px;top:562.00px;font-size:14.00px;line-height:14.00px;color:#808080;white-space:nowrap;transform:scaleX(0.900);transform-origin:100% 50%;">-170</div>
<div class="a" style="right:291.50px;top:562.00px;font-size:14.00px;line-height:14.00px;color:#808080;white-space:nowrap;transform:scaleX(0.900);transform-origin:100% 50%;">-190</div>
<div class="a" style="right:207.50px;top:562.00px;font-size:14.00px;line-height:14.00px;color:#222222;white-space:nowrap;transform:scaleX(0.900);transform-origin:100% 50%;">-540</div>
<div class="a" style="right:123.50px;top:562.00px;font-size:14.00px;line-height:14.00px;color:#7A7A7A;font-weight:bold;white-space:nowrap;transform:scaleX(0.900);transform-origin:100% 50%;">-540</div>
<div class="a" style="left:106.80px;top:582.00px;font-size:14.00px;line-height:14.00px;color:#808080;white-space:nowrap;transform:scaleX(0.970);transform-origin:0 50%;">Saídas/Cinema/Lazer</div>
<div class="a" style="right:459.50px;top:582.00px;font-size:14.00px;line-height:14.00px;color:#808080;white-space:nowrap;transform:scaleX(0.900);transform-origin:100% 50%;">-260</div>
<div class="a" style="right:375.50px;top:582.00px;font-size:14.00px;line-height:14.00px;color:#808080;white-space:nowrap;transform:scaleX(0.900);transform-origin:100% 50%;">-230</div>
<div class="a" style="right:291.50px;top:582.00px;font-size:14.00px;line-height:14.00px;color:#808080;white-space:nowrap;transform:scaleX(0.900);transform-origin:100% 50%;">-300</div>
<div class="a" style="right:207.50px;top:582.00px;font-size:14.00px;line-height:14.00px;color:#222222;white-space:nowrap;transform:scaleX(0.900);transform-origin:100% 50%;">-790</div>
<div class="a" style="right:123.50px;top:582.00px;font-size:14.00px;line-height:14.00px;color:#7A7A7A;font-weight:bold;white-space:nowrap;transform:scaleX(0.900);transform-origin:100% 50%;">-790</div>
<div class="a" style="left:0;top:0;width:268px;height:702px;overflow:hidden"><div class="a" style="left:106.80px;top:602.00px;font-size:14.00px;line-height:14.00px;color:#808080;white-space:nowrap;transform:scaleX(1.040);transform-origin:0 50%;">Salão/Manicure/Depilação</div></div>
<div class="a" style="right:459.50px;top:602.00px;font-size:14.00px;line-height:14.00px;color:#808080;white-space:nowrap;transform:scaleX(0.900);transform-origin:100% 50%;">-180</div>
<div class="a" style="right:375.50px;top:602.00px;font-size:14.00px;line-height:14.00px;color:#808080;white-space:nowrap;transform:scaleX(0.900);transform-origin:100% 50%;">-160</div>
<div class="a" style="right:291.50px;top:602.00px;font-size:14.00px;line-height:14.00px;color:#808080;white-space:nowrap;transform:scaleX(0.900);transform-origin:100% 50%;">-190</div>
<div class="a" style="right:207.50px;top:602.00px;font-size:14.00px;line-height:14.00px;color:#222222;white-space:nowrap;transform:scaleX(0.900);transform-origin:100% 50%;">-530</div>
<div class="a" style="right:123.50px;top:602.00px;font-size:14.00px;line-height:14.00px;color:#7A7A7A;font-weight:bold;white-space:nowrap;transform:scaleX(0.900);transform-origin:100% 50%;">-530</div>
<div class="a" style="left:106.80px;top:622.00px;font-size:14.00px;line-height:14.00px;color:#808080;white-space:nowrap;transform:scaleX(0.970);transform-origin:0 50%;">Tarifas bancárias</div>
<div class="a" style="right:459.50px;top:622.00px;font-size:14.00px;line-height:14.00px;color:#808080;white-space:nowrap;transform:scaleX(0.900);transform-origin:100% 50%;">-45</div>
<div class="a" style="right:375.50px;top:622.00px;font-size:14.00px;line-height:14.00px;color:#808080;white-space:nowrap;transform:scaleX(0.900);transform-origin:100% 50%;">-45</div>
<div class="a" style="right:291.50px;top:622.00px;font-size:14.00px;line-height:14.00px;color:#808080;white-space:nowrap;transform:scaleX(0.900);transform-origin:100% 50%;">-45</div>
<div class="a" style="right:207.50px;top:622.00px;font-size:14.00px;line-height:14.00px;color:#222222;white-space:nowrap;transform:scaleX(0.900);transform-origin:100% 50%;">-135</div>
<div class="a" style="right:123.50px;top:622.00px;font-size:14.00px;line-height:14.00px;color:#7A7A7A;font-weight:bold;white-space:nowrap;transform:scaleX(0.900);transform-origin:100% 50%;">-135</div>
<div class="a" style="left:106.80px;top:642.00px;font-size:14.00px;line-height:14.00px;color:#808080;white-space:nowrap;transform:scaleX(0.970);transform-origin:0 50%;">Telefonia/Celular</div>
<div class="a" style="right:459.50px;top:642.00px;font-size:14.00px;line-height:14.00px;color:#808080;white-space:nowrap;transform:scaleX(0.900);transform-origin:100% 50%;">-160</div>
<div class="a" style="right:375.50px;top:642.00px;font-size:14.00px;line-height:14.00px;color:#808080;white-space:nowrap;transform:scaleX(0.900);transform-origin:100% 50%;">-160</div>
<div class="a" style="right:291.50px;top:642.00px;font-size:14.00px;line-height:14.00px;color:#808080;white-space:nowrap;transform:scaleX(0.900);transform-origin:100% 50%;">-160</div>
<div class="a" style="right:207.50px;top:642.00px;font-size:14.00px;line-height:14.00px;color:#222222;white-space:nowrap;transform:scaleX(0.900);transform-origin:100% 50%;">-480</div>
<div class="a" style="right:123.50px;top:642.00px;font-size:14.00px;line-height:14.00px;color:#7A7A7A;font-weight:bold;white-space:nowrap;transform:scaleX(0.900);transform-origin:100% 50%;">-480</div>
<div class="a" style="left:65px;top:658px;width:623px;height:21px;background:#DAF2D0"></div>
<div class="a" style="left:67.50px;top:662.00px;font-size:14.00px;line-height:14.00px;color:#213B1D;font-weight:bold;white-space:nowrap;transform:scaleX(0.930);transform-origin:0 50%;">Total Geral</div>
<div class="a" style="right:459.50px;top:662.00px;font-size:14.00px;line-height:14.00px;color:#213B1D;font-weight:bold;white-space:nowrap;transform:scaleX(0.900);transform-origin:100% 50%;">2.250</div>
<div class="a" style="right:375.50px;top:662.00px;font-size:14.00px;line-height:14.00px;color:#213B1D;font-weight:bold;white-space:nowrap;transform:scaleX(0.900);transform-origin:100% 50%;">2.400</div>
<div class="a" style="right:291.50px;top:662.00px;font-size:14.00px;line-height:14.00px;color:#213B1D;font-weight:bold;white-space:nowrap;transform:scaleX(0.900);transform-origin:100% 50%;">2.066</div>
<div class="a" style="right:207.50px;top:662.00px;font-size:14.00px;line-height:14.00px;color:#213B1D;font-weight:bold;white-space:nowrap;transform:scaleX(0.900);transform-origin:100% 50%;">6.716</div>
<div class="a" style="right:123.50px;top:662.00px;font-size:14.00px;line-height:14.00px;color:#213B1D;font-weight:bold;white-space:nowrap;transform:scaleX(0.900);transform-origin:100% 50%;">6.716</div>
<div class="a" style="left:520px;top:178px;width:1px;height:500px;background:#D9D9D9"></div>
<div class="a" style="left:603px;top:177px;width:86px;height:502px;border:2px solid #1F2A48"></div>
<svg class="a" style="left:690px;top:183px" width="24" height="24" viewBox="0 0 24 24" shape-rendering="crispEdges"><path d="M9 5 H15 V9 H19 V15 H15 V19 H9 V15 H5 V9 H9Z" fill="#000"/><path d="M8 4 H14 V8 H18 V14 H14 V18 H8 V14 H4 V8 H8Z" fill="#000"/><path d="M9 5 H13 V9 H17 V13 H13 V17 H9 V13 H5 V9 H9Z" fill="#fff"/></svg>
</body></html>
